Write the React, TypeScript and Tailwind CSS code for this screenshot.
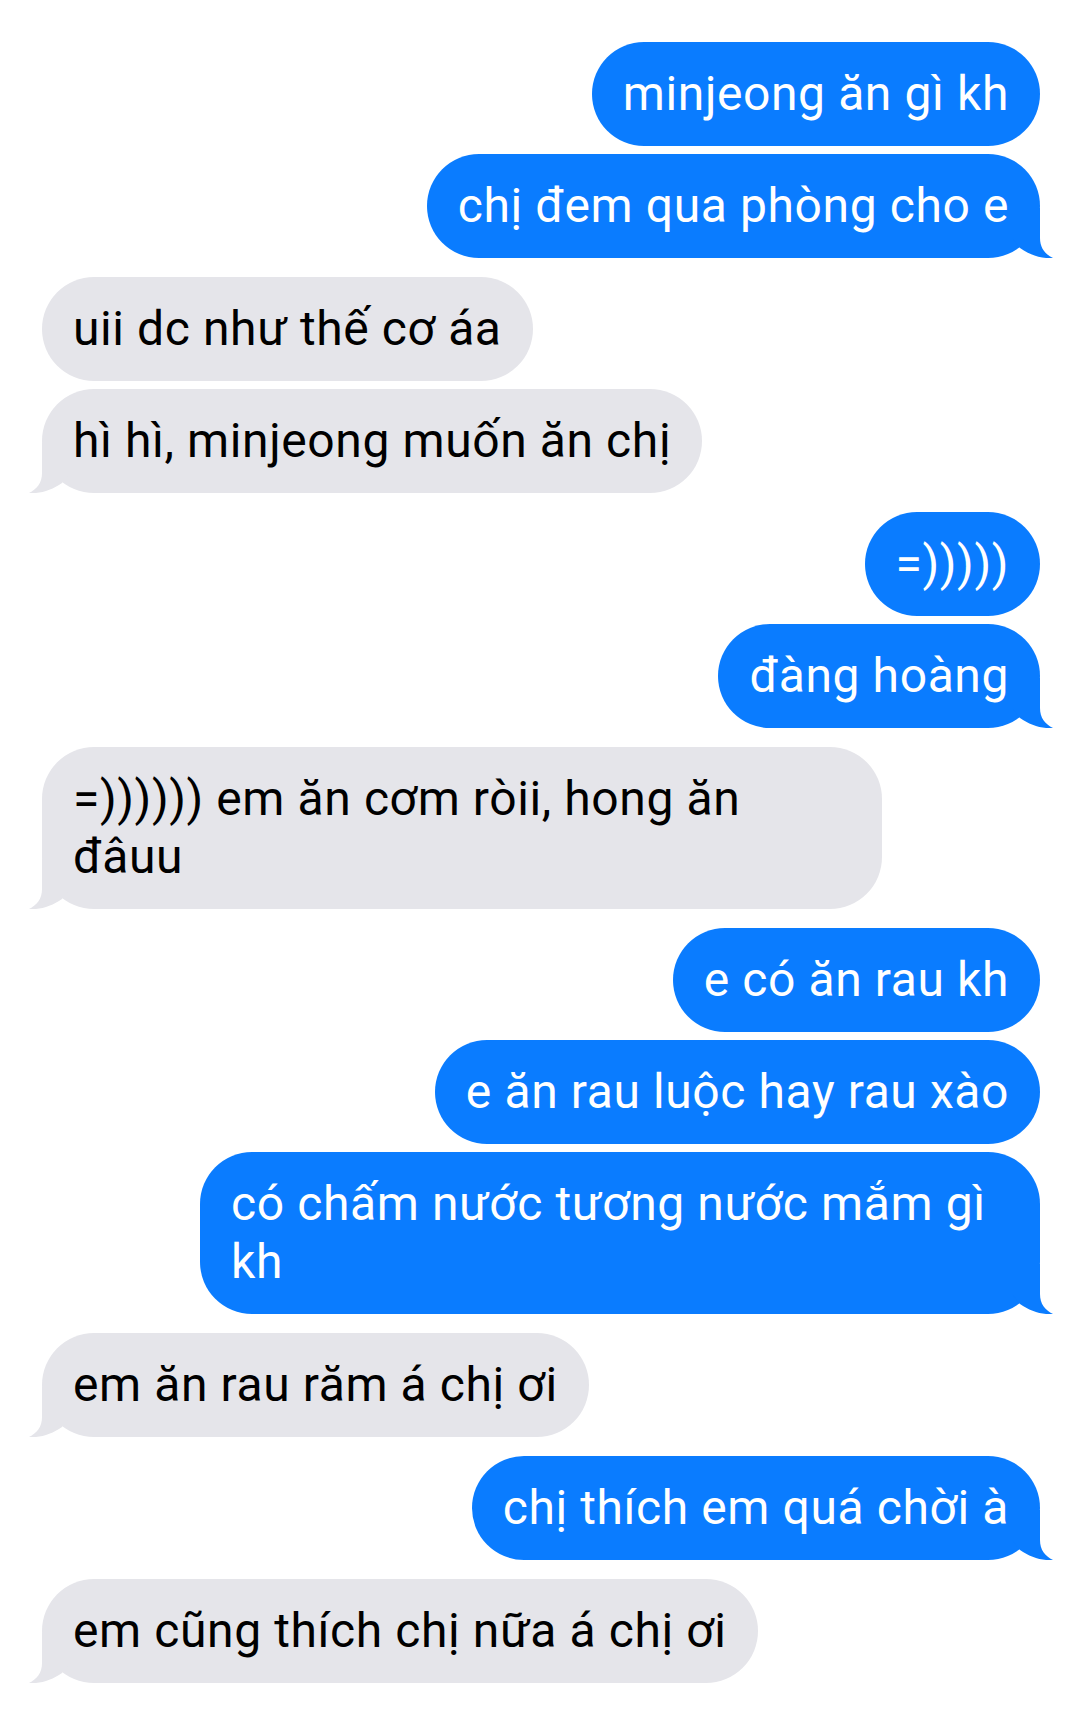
import clsx from 'clsx';

type Msg = { me: boolean; lines: string[]; wide?: boolean };

// grouped by sender, tail drawn on the last bubble of each group
const groups: Msg[][] = [
  [
    { me: true, lines: ['minjeong ăn gì kh'] },
    { me: true, lines: ['chị đem qua phòng cho e'] },
  ],
  [
    { me: false, lines: ['uii dc như thế cơ áa'] },
    { me: false, lines: ['hì hì, minjeong muốn ăn chị'] },
  ],
  [
    { me: true, lines: ['=)))))'] },
    { me: true, lines: ['đàng hoàng'] },
  ],
  [{ me: false, lines: ['=)))))) em ăn cơm ròii, hong ăn', 'đâuu'], wide: true }],
  [
    { me: true, lines: ['e có ăn rau kh'] },
    { me: true, lines: ['e ăn rau luộc hay rau xào'] },
    { me: true, lines: ['có chấm nước tương nước mắm gì', 'kh'], wide: true },
  ],
  [{ me: false, lines: ['em ăn rau răm á chị ơi'] }],
  [{ me: true, lines: ['chị thích em quá chời à'] }],
  [{ me: false, lines: ['em cũng thích chị nữa á chị ơi'] }],
];

function Tail({ me }: { me: boolean }) {
  return (
    <svg
      viewBox="0 0 41 50"
      className={clsx(
        'absolute bottom-0 w-[41px] h-[50px]',
        me ? '-right-[13px] fill-[#0a7cff]' : '-left-[13px] -scale-x-100 fill-[#e5e5ea]'
      )}
    >
      <path d="M28 0 L28 30 C28 40 33 46 41 50 C30 51 18 47 8 40 L0 30 L0 0 Z" />
    </svg>
  );
}

function Bubble({ msg, tail }: { msg: Msg; tail: boolean }) {
  return (
    <div className={clsx('flex', msg.me ? 'justify-end' : 'justify-start')}>
      <div
        className={clsx(
          'relative rounded-[52px] px-[31px] py-[23px] text-[48px] leading-[58px] tracking-[0.6px]',
          msg.me ? 'bg-[#0a7cff] text-white' : 'bg-[#e5e5ea] text-black',
          msg.wide && 'w-[840px]'
        )}
      >
        {msg.lines.map((l, i) => (
          <div key={i} className="whitespace-nowrap">
            {l}
          </div>
        ))}
        {tail && <Tail me={msg.me} />}
      </div>
    </div>
  );
}

export default function App() {
  return (
    <div
      className="w-[1080px] h-[1723px] bg-white pt-[42px] pl-[42px] pr-[40px] flex flex-col gap-[19px] overflow-hidden"
      style={{ fontFamily: 'Roboto, "Noto Sans", sans-serif' }}
    >
      {groups.map((g, gi) => (
        <div key={gi} className="flex flex-col gap-[8px]">
          {g.map((m, mi) => (
            <Bubble key={mi} msg={m} tail={mi === g.length - 1} />
          ))}
        </div>
      ))}
    </div>
  );
}
